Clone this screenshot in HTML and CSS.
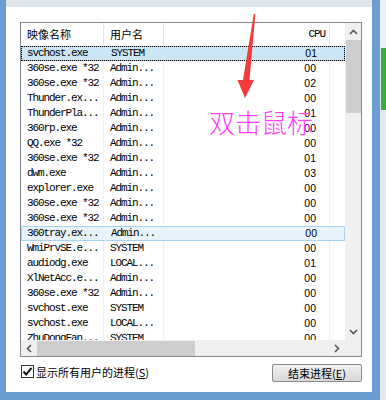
FILE: index.html
```html
<!DOCTYPE html>
<html lang="zh">
<head>
<meta charset="utf-8">
<link rel="stylesheet" href="styles.css">
</head>
<body>
<div class="screen">
  <div class="frame-left"></div>
  <div class="win">
    <div class="titlebar"></div>
    <div class="panel">
      <div class="listview">
        <div class="lv-content">
          <div class="lv-header">
            <div class="hc c1">映像名称</div>
            <div class="hc c2">用户名</div>
            <div class="hc c3 mono">CPU</div>
            <div class="hc c4"></div>
          </div>
          <div class="lv-rows">
            <div class="row selected"><span class="c1 mono">svchost.exe</span><span class="c2 mono">SYSTEM</span><span class="c3 num">01</span><span class="c4"></span></div>
            <div class="row"><span class="c1 mono">360se.exe *32</span><span class="c2 mono">Admin...</span><span class="c3 num">00</span><span class="c4"></span></div>
            <div class="row"><span class="c1 mono">360se.exe *32</span><span class="c2 mono">Admin...</span><span class="c3 num">02</span><span class="c4"></span></div>
            <div class="row"><span class="c1 mono">Thunder.ex...</span><span class="c2 mono">Admin...</span><span class="c3 num">00</span><span class="c4"></span></div>
            <div class="row"><span class="c1 mono">ThunderPla...</span><span class="c2 mono">Admin...</span><span class="c3 num">01</span><span class="c4"></span></div>
            <div class="row"><span class="c1 mono">360rp.exe</span><span class="c2 mono">Admin...</span><span class="c3 num">00</span><span class="c4"></span></div>
            <div class="row"><span class="c1 mono">QQ.exe *32</span><span class="c2 mono">Admin...</span><span class="c3 num">00</span><span class="c4"></span></div>
            <div class="row"><span class="c1 mono">360se.exe *32</span><span class="c2 mono">Admin...</span><span class="c3 num">01</span><span class="c4"></span></div>
            <div class="row"><span class="c1 mono">dwm.exe</span><span class="c2 mono">Admin...</span><span class="c3 num">03</span><span class="c4"></span></div>
            <div class="row"><span class="c1 mono">explorer.exe</span><span class="c2 mono">Admin...</span><span class="c3 num">00</span><span class="c4"></span></div>
            <div class="row"><span class="c1 mono">360se.exe *32</span><span class="c2 mono">Admin...</span><span class="c3 num">00</span><span class="c4"></span></div>
            <div class="row"><span class="c1 mono">360se.exe *32</span><span class="c2 mono">Admin...</span><span class="c3 num">00</span><span class="c4"></span></div>
            <div class="row hover"><span class="c1 mono">360tray.ex...</span><span class="c2 mono">Admin...</span><span class="c3 num">00</span><span class="c4"></span></div>
            <div class="row"><span class="c1 mono">WmiPrvSE.e...</span><span class="c2 mono">SYSTEM</span><span class="c3 num">00</span><span class="c4"></span></div>
            <div class="row"><span class="c1 mono">audiodg.exe</span><span class="c2 mono">LOCAL...</span><span class="c3 num">01</span><span class="c4"></span></div>
            <div class="row"><span class="c1 mono">XlNetAcc.e...</span><span class="c2 mono">Admin...</span><span class="c3 num">00</span><span class="c4"></span></div>
            <div class="row"><span class="c1 mono">360se.exe *32</span><span class="c2 mono">Admin...</span><span class="c3 num">00</span><span class="c4"></span></div>
            <div class="row"><span class="c1 mono">svchost.exe</span><span class="c2 mono">SYSTEM</span><span class="c3 num">00</span><span class="c4"></span></div>
            <div class="row"><span class="c1 mono">svchost.exe</span><span class="c2 mono">LOCAL...</span><span class="c3 num">00</span><span class="c4"></span></div>
            <div class="row"><span class="c1 mono">ZhuDongFan...</span><span class="c2 mono">SYSTEM</span><span class="c3 num">00</span><span class="c4"></span></div>
          </div>
        </div>
        <div class="vscroll">
          <div class="sb-btn"><svg width="9" height="6" viewBox="0 0 9 6"><path d="M1 5 L4.5 1.5 L8 5" fill="none" stroke="#555" stroke-width="1.6"/></svg></div>
          <div class="vthumb"></div>
          <div class="vtrack"></div>
          <div class="sb-btn"><svg width="9" height="6" viewBox="0 0 9 6"><path d="M1 1 L4.5 4.5 L8 1" fill="none" stroke="#555" stroke-width="1.6"/></svg></div>
        </div>
        <div class="hscroll">
          <div class="sb-btn-h"><svg width="6" height="9" viewBox="0 0 6 9"><path d="M5 1 L1.5 4.5 L5 8" fill="none" stroke="#555" stroke-width="1.6"/></svg></div>
          <div class="hthumb"></div>
          <div class="htrack"></div>
          <div class="sb-btn-h"><svg width="6" height="9" viewBox="0 0 6 9"><path d="M1 1 L4.5 4.5 L1 8" fill="none" stroke="#555" stroke-width="1.6"/></svg></div>
        </div>
        <div class="corner"></div>
      </div>
      <div class="footer">
        <label class="check">
          <span class="box"><svg width="11" height="11" viewBox="0 0 11 11"><path d="M1.5 5.5 L4.2 8.5 L9.5 1.8" fill="none" stroke="#111" stroke-width="2"/></svg></span>
          <span class="check-text">显示所有用户的进程(<u>S</u>)</span>
        </label>
        <div class="button">结束进程(<u>E</u>)</div>
      </div>
    </div>
    <div class="bottom"></div>
  </div>
  <div class="frame-right"></div>
  <div class="edge">
    <div class="edge-top"></div>
    <div class="edge-green"></div>
  </div>
  <svg class="arrow" width="386" height="400" viewBox="0 0 386 400">
    <path d="M253.8 14 L255.4 14 L249.5 80 L254 80 L245 98 L237.5 80 L243 80 Z" fill="#f23b3b"/>
  </svg>
  <div class="note">双击鼠标</div>
</div>
</body>
</html>
```

FILE: styles.css
```css
* { box-sizing: border-box; }
html, body { margin: 0; padding: 0; }
body {
  width: 386px;
  height: 400px;
  overflow: hidden;
  background: #6b9dd3;
  font-family: "Noto Sans CJK SC", "Liberation Sans", sans-serif;
  color: #000;
}
.screen {
  position: relative;
  display: flex;
  width: 386px;
  height: 400px;
}
.frame-left { width: 6px; background: #6b9dd3; }
.win {
  width: 366px;
  display: flex;
  flex-direction: column;
}
.titlebar { height: 7px; background: #dfe5ec; }
.panel {
  height: 385px;
  background: #fff;
  padding: 15px 10px 0 14px;
  display: flex;
  flex-direction: column;
}
.bottom { flex: 1; background: #6b9dd3; }
.frame-right { width: 8px; background: #6b9dd3; }
.edge {
  width: 6px;
  background: #e4e8ec;
  display: flex;
  flex-direction: column;
}
.edge-top { height: 48px; background: #eef1f4; }
.edge-green { height: 62px; background: #3eaa3a; margin-left: 1px; }

/* list view */
.listview {
  width: 342px;
  height: 335px;
  border: 1px solid #828790;
  display: grid;
  grid-template-columns: 324px 16px;
  grid-template-rows: 317px 16px;
  overflow: hidden;
}
.lv-content { grid-column: 1; grid-row: 1; overflow: hidden; background: #fff; }
.vscroll { grid-column: 2; grid-row: 1; }
.hscroll { grid-column: 1; grid-row: 2; }
.corner { grid-column: 2; grid-row: 2; }
.lv-header, .row {
  display: grid;
  grid-template-columns: 83px 60px 166px 15px;
}
.lv-header { height: 23px; align-items: stretch; }
.hc {
  font-size: 11px;
  line-height: 22px;
  padding-left: 6px;
  border-right: 1px solid #e5e5e5;
  white-space: nowrap;
}
.hc.c3 { text-align: right; padding-right: 4px; line-height: 23px; }
.hc.c4 { border-right: none; }
.mono {
  font-family: "Liberation Mono", monospace;
  font-size: 11px;
  letter-spacing: -1.1px;
}
.num {
  font-family: "Liberation Sans", sans-serif;
  font-size: 10.5px;
}
.row {
  height: 15px;
  line-height: 14px;
  white-space: nowrap;
}
.row > span { overflow: hidden; border-right: 1px solid #eef2f7; }
.row > .c1 { padding-left: 6px; }
.row > .c2 { padding-left: 6px; }
.row > .c3 { text-align: right; padding-right: 13px; }
.row > .c4 { border-right: none; }
.row.selected {
  background: #cce6f5;
  border: 1px solid #84c3ea;
  outline: 1px dotted #000;
  outline-offset: -1px;
  line-height: 13px;
}
.row.selected > span, .row.hover > span { border-right-color: transparent; }
.row.selected > .c1 { padding-left: 5px; }
.row.hover {
  background: #e6f3fb;
  border: 1px solid #a6d6f3;
  line-height: 13px;
}
.row.hover > .c1 { padding-left: 5px; }

/* scrollbars */
.vscroll {
  background: #f0f0f0;
  display: flex;
  flex-direction: column;
}
.sb-btn {
  height: 17px;
  display: flex;
  align-items: center;
  justify-content: center;
}
.vthumb { height: 73px; background: #cdcdcd; margin: 0 0 0 1px; }
.vtrack { flex: 1; }
.hscroll {
  background: #f0f0f0;
  display: flex;
}
.sb-btn-h {
  width: 16px;
  display: flex;
  align-items: center;
  justify-content: center;
}
.hthumb { width: 158px; background: #cdcdcd; margin-top: 1px; }
.htrack { flex: 1; }
.corner { background: #f0f0f0; }

/* footer */
.footer {
  margin-top: 7px;
  width: 342px;
  display: flex;
  justify-content: space-between;
  align-items: flex-start;
}
.check {
  display: flex;
  align-items: center;
  gap: 2px;
  margin-left: 1px;
  height: 14px;
}
.box {
  width: 13px;
  height: 13px;
  border: 1px solid #333;
  background: #fff;
  display: flex;
  align-items: center;
  justify-content: center;
}
.check-text {
  font-size: 11px;
  line-height: 14px;
  margin-top: 1px;
  white-space: nowrap;
}
.button {
  width: 90px;
  height: 18px;
  border: 1px solid #8a8a8a;
  border-radius: 2px;
  background: linear-gradient(#f3f3f3, #e3e3e3 50%, #d9d9d9);
  font-size: 11px;
  line-height: 16px;
  text-align: center;
  white-space: nowrap;
}
u { text-decoration: underline; text-underline-offset: 1px; }

/* overlays */
.arrow {
  position: absolute;
  left: 0;
  top: 0;
  pointer-events: none;
}
.note {
  position: absolute;
  left: 209px;
  top: 109px;
  font-size: 26px;
  line-height: 26px;
  font-weight: 300;
  color: #ff3cff;
  white-space: nowrap;
}
```
